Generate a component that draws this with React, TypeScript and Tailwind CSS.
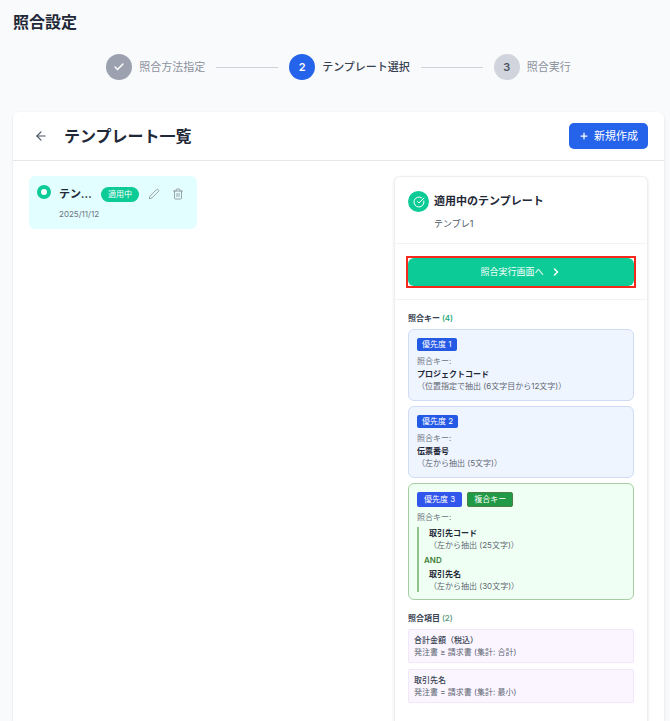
import { ArrowLeft, Check, ChevronRight, CircleCheckBig, Plus } from 'lucide-react';

const steps = [
  { id: 1, label: '照合方法指定', state: 'done' },
  { id: 2, label: 'テンプレート選択', state: 'current' },
  { id: 3, label: '照合実行', state: 'todo' },
];

const circleStyles: Record<string, string> = {
  done: 'bg-[#9ca1af] text-white',
  current: 'bg-[#2563eb] text-white',
  todo: 'bg-[#d1d4dc] text-[#4b5563]',
};

const singleKeys = [
  { priority: 1, name: 'プロジェクトコード', rule: '（位置指定で抽出 (6文字目から12文字)）' },
  { priority: 2, name: '伝票番号', rule: '（左から抽出 (5文字)）' },
];

const compareItems = [
  { name: '合計金額（税込）', rule: '発注書 ≥ 請求書 (集計: 合計)' },
  { name: '取引先名', rule: '発注書 = 請求書 (集計: 最小)' },
];

const PencilIcon = () => (
  <svg className="size-3" viewBox="0 0 24 24" fill="none" stroke="currentColor" strokeWidth="1.8" strokeLinejoin="round">
    <path d="M17 3.2a2.7 2.7 0 0 1 3.8 3.8L7.5 20.3 2.5 21.5l1.2-5z" />
  </svg>
);

const TrashIcon = () => (
  <svg className="size-3" viewBox="0 0 24 24" fill="none" stroke="currentColor" strokeWidth="1.8" strokeLinecap="round" strokeLinejoin="round">
    <path d="M3 6h18M5 6v14a2 2 0 0 0 2 2h10a2 2 0 0 0 2-2V6M8 6V4a2 2 0 0 1 2-2h4a2 2 0 0 1 2 2v2M10 11v6M14 11v6" />
  </svg>
);

const Stepper = () => (
  <ol className="mt-5 flex items-center justify-center">
    {steps.map((step, i) => (
      <li key={step.id} className="flex items-center">
        {i > 0 && <span className="mx-[11px] h-px w-[62px] bg-[#cdd1d8]" />}
        <span className={`mr-[7px] flex size-[26px] items-center justify-center rounded-full text-[11px] font-semibold ${circleStyles[step.state]}`}>
          {step.state === 'done' ? <Check className="size-3" strokeWidth={3} /> : step.id}
        </span>
        <span className={`text-[11px] leading-4 ${step.state === 'current' ? 'font-medium text-[#374151]' : 'text-[#8b919d]'}`}>
          {step.label}
        </span>
      </li>
    ))}
  </ol>
);

const TemplateCard = () => (
  <div className="h-[53px] rounded-md bg-[#e2fefe] px-2 pt-2">
    <label className="flex items-start gap-2">
      <input
        type="radio"
        name="template"
        defaultChecked
        aria-label="テンプレ1"
        className="mt-px size-[14px] shrink-0 appearance-none rounded-full border-4 border-[#0ccb96] bg-white"
      />
      <div className="min-w-0 flex-1">
        <div className="flex h-5 items-center">
          <span className="w-9 truncate text-[11px] font-bold text-[#1f2937]">テンプレ1</span>
          <span className="ml-[6px] h-[15px] shrink-0 rounded-full bg-[#0ccb96] px-[7px] text-[8px] leading-[15px] text-white">適用中</span>
          <button type="button" aria-label="編集" className="ml-[9px] text-[#8f9aa3]">
            <PencilIcon />
          </button>
          <button type="button" aria-label="削除" className="ml-3 text-[#8f9aa3]">
            <TrashIcon />
          </button>
        </div>
        <p className="mt-1 text-[8px] leading-3 text-[#6b7280]">2025/11/12</p>
      </div>
    </label>
  </div>
);

const KeyDetail = ({ name, rule }: { name: string; rule: string }) => (
  <>
    <p className="font-bold text-[#1f2937]">{name}</p>
    <p className="text-[#5f6673]">{rule}</p>
  </>
);

const AppliedTemplate = () => (
  <aside className="w-[254px] shrink-0 rounded-t-md border border-b-0 border-[#eceef1] bg-white shadow-sm">
    <div className="flex gap-[5px] border-b border-[#f1f3f5] px-[13px] pt-[14px] pb-[11px]">
      <span className="flex size-[21px] shrink-0 items-center justify-center rounded-full bg-[#0ccb96] text-white">
        <CircleCheckBig className="size-3" />
      </span>
      <div>
        <h3 className="text-[11px] leading-[21px] font-bold text-[#1f2937]">適用中のテンプレート</h3>
        <p className="mt-1 text-[9px] leading-4 text-[#4b5563]">テンプレ1</p>
      </div>
    </div>

    <div className="border-b border-[#f1f3f5] px-[13px] pt-[14px] pb-[13px]">
      <div className="outline-2 outline-[#f5281e]">
        <button
          type="button"
          className="flex h-7 w-full items-center justify-center gap-[6px] rounded-md bg-[#0ccb96] text-[9px] text-white"
        >
          照合実行画面へ
          <ChevronRight className="size-3" strokeWidth={3} />
        </button>
      </div>
    </div>

    <div className="px-[13px] pt-3 text-[8px] leading-3">
      <h4 className="font-bold text-[#374151]">
        照合キー <span className="font-medium text-[#10a371]">(4)</span>
      </h4>

      <div className="mt-[5px] space-y-[5px]">
        {singleKeys.map((key) => (
          <div key={key.priority} className="rounded-md border border-[#cfdcf3] bg-[#eff5ff] p-2">
            <span className="block w-fit rounded-[2px] bg-[#2459e6] px-[5px] leading-[13px] text-white">優先度 {key.priority}</span>
            <p className="mt-1 mb-px text-[#6b7280]">照合キー:</p>
            <KeyDetail name={key.name} rule={key.rule} />
          </div>
        ))}

        {/* Composite key */}
        <div className="rounded-md border border-[#a5cfa2] bg-[#effff4] px-2 pt-2 pb-[7px]">
          <div className="flex gap-[5px] leading-[15px] text-white">
            <span className="rounded-[2px] bg-[#3156ec] px-[7px]">優先度 3</span>
            <span className="rounded-[2px] border border-[#4d8044] bg-[#209a46] px-[6px] leading-[13px]">複合キー</span>
          </div>
          <p className="mt-1 text-[#6b7280]">照合キー:</p>
          <div className="mt-1 border-l-2 border-[#91c28e] pl-[5px]">
            <div className="pl-[5px]">
              <KeyDetail name="取引先コード" rule="（左から抽出 (25文字)）" />
            </div>
            <p className="mt-[3px] mb-[2px] font-semibold text-[#3f7d37]">AND</p>
            <div className="pl-[5px]">
              <KeyDetail name="取引先名" rule="（左から抽出 (30文字)）" />
            </div>
          </div>
        </div>
      </div>

      <h4 className="mt-3 font-bold text-[#374151]">
        照合項目 <span className="font-medium text-[#4f9277]">(2)</span>
      </h4>
      <div className="mt-[5px] space-y-[6px]">
        {compareItems.map((item) => (
          <div key={item.name} className="rounded-[2px] border border-[#f0e8fa] bg-[#faf5ff] px-[5px] py-1">
            <p className="font-medium text-[#374151]">{item.name}</p>
            <p className="text-[#5f6673]">{item.rule}</p>
          </div>
        ))}
      </div>
    </div>
  </aside>
);

const App = () => {
  return (
    <div className="flex min-h-screen flex-col bg-[#f9fafc] pr-[6px] pl-[13px] font-['Inter','Noto_Sans_CJK_JP',sans-serif]">
      <h1 className="pt-[10px] text-base leading-6 font-bold text-[#1f2937]">照合設定</h1>
      <Stepper />

      <main className="mt-8 flex flex-1 flex-col rounded-t-md bg-white shadow-sm">
        <header className="flex h-[49px] items-center border-b border-[#e5e7eb] px-4">
          <button type="button" aria-label="戻る" className="ml-[5px] text-[#4b5563]">
            <ArrowLeft className="size-[14px]" />
          </button>
          <h2 className="ml-4 text-base leading-6 font-bold text-[#1f2937]">テンプレート一覧</h2>
          <button
            type="button"
            className="ml-auto flex h-[26px] items-center gap-[5px] rounded-[5px] bg-[#2563eb] px-[10px] text-[11px] text-white"
          >
            <Plus className="size-[10px]" strokeWidth={3} />
            新規作成
          </button>
        </header>

        <div className="flex flex-1 gap-[14px] px-4 pt-[15px]">
          <div className="grid flex-1 grid-cols-2 content-start gap-4">
            <TemplateCard />
          </div>
          <AppliedTemplate />
        </div>
      </main>
    </div>
  );
};

export default App;
